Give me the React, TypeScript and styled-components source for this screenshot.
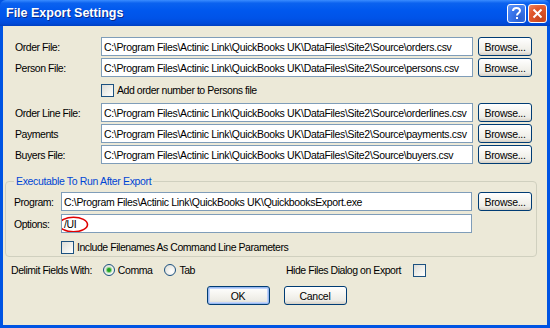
import React from "react";
import styled, { createGlobalStyle, css } from "styled-components";

const Global = createGlobalStyle`
  html, body { margin: 0; padding: 0; background: #ece9d8; }
  body { width: 550px; height: 328px; overflow: hidden; font-family: "Liberation Sans", Arial, sans-serif; }
`;

const Window = styled.div`
  width: 550px;
  height: 328px;
  box-sizing: border-box;
  display: flex;
  flex-direction: column;
  background: #0054e3;
`;

const TitleBar = styled.div`
  height: 26px;
  flex: none;
  display: flex;
  align-items: center;
  padding: 0 3px 0 6px;
  background: linear-gradient(
    to bottom,
    #3a8cff 0%,
    #0b62ef 12%,
    #0058ee 40%,
    #0053e8 70%,
    #004ad9 90%,
    #003fc0 100%
  );
  border-radius: 6px 6px 0 0;
`;

const Title = styled.div`
  flex: 1;
  color: #fff;
  font-family: "Liberation Sans", Arial, sans-serif;
  font-weight: bold;
  font-size: 12.5px;
  letter-spacing: 0px;
  text-shadow: 1px 1px 0 #0a2a8a;
`;

const CaptionButton = styled.div<{ $variant: "help" | "close" }>`
  width: 19px;
  height: 19px;
  box-sizing: border-box;
  border: 1px solid #fff;
  border-radius: 3px;
  margin-left: 2px;
  display: flex;
  align-items: center;
  justify-content: center;
  color: #fff;
  ${(p) =>
    p.$variant === "help"
      ? css`
          background: radial-gradient(circle at 70% 80%, #2a5fd0 0%, #3c7af0 60%, #6a9cf7 100%);
        `
      : css`
          background: radial-gradient(circle at 70% 80%, #c6451e 0%, #e2582c 60%, #f08866 100%);
        `}
`;

const Body = styled.div`
  flex: 1;
  margin: 0 3px 3px 3px;
  background: #ece9d8;
  display: flex;
  flex-direction: column;
  padding: 11px 0 0 0;
  font-size: 10px;
  color: #000;
`;

const FileGrid = styled.div`
  display: grid;
  grid-template-columns: 81px 372px 54px;
  column-gap: 5px;
  row-gap: 2px;
  padding-left: 12px;
  align-items: center;
`;

const Label = styled.div`
  font-size: 10.5px;
  letter-spacing: -0.45px;
  white-space: nowrap;
`;

const TextBox = styled.div`
  height: 19px;
  box-sizing: border-box;
  border: 1px solid #7f9db9;
  background: #fff;
  padding: 0 2px;
  display: flex;
  align-items: center;
  font-size: 10.5px;
  letter-spacing: -0.33px;
  white-space: nowrap;
  overflow: hidden;
  position: relative;
`;

const Button = styled.div<{ $width?: number; $default?: boolean }>`
  width: ${(p) => p.$width ?? 54}px;
  height: 19px;
  box-sizing: border-box;
  border: 1px solid #003c74;
  border-radius: 3px;
  background: linear-gradient(to bottom, #ffffff 0%, #f4f3ee 50%, #ecebe5 80%, #d6d0c5 100%);
  display: flex;
  align-items: center;
  justify-content: center;
  font-size: 10.5px;
  letter-spacing: -0.3px;
  ${(p) =>
    p.$default &&
    css`
      box-shadow: inset 0 0 0 1px #99b9f0, inset 0 0 0 2px #c1d3fb;
    `}
`;

const CheckRow = styled.div<{ $span?: boolean }>`
  display: flex;
  align-items: center;
  gap: 3px;
  height: 22px;
  ${(p) => p.$span && css`grid-column: 2 / 4;`}
`;

const CheckBox = styled.div`
  width: 13px;
  height: 13px;
  box-sizing: border-box;
  border: 1px solid #1c5180;
  background: linear-gradient(135deg, #dcdcd7 0%, #f2f2ee 60%, #ffffff 100%);
  flex: none;
`;

const GroupBox = styled.fieldset`
  margin: 11px 10px 0 2px;
  padding: 5px 4px 0 8px;
  border: 1px solid #d0d0bf;
  border-radius: 4px;
  height: 82px;
  box-sizing: border-box;
  min-width: 0;
`;

const Legend = styled.legend`
  color: #0046d5;
  font-size: 10.5px;
  letter-spacing: -0.35px;
  padding: 0 2px;
  margin-left: 0px;
`;

const ProgGrid = styled.div`
  display: grid;
  grid-template-columns: 41px 411px 54px;
  column-gap: 6px;
  row-gap: 3px;
  align-items: center;
`;

const Ellipse = styled.svg`
  position: absolute;
  left: -4px;
  top: 1px;
`;

const BottomRow = styled.div`
  display: flex;
  align-items: center;
  height: 16px;
  margin-top: 5px;
  padding-left: 8px;
`;

const Radio = styled.div<{ $checked?: boolean }>`
  width: 12px;
  height: 12px;
  box-sizing: border-box;
  border-radius: 50%;
  border: 1px solid #1c5180;
  background: radial-gradient(circle at 65% 65%, #ffffff 0%, #e6e6e0 70%, #d2d2cb 100%);
  display: flex;
  align-items: center;
  justify-content: center;
  flex: none;
  &::after {
    content: "";
    display: ${(p) => (p.$checked ? "block" : "none")};
    width: 4px;
    height: 4px;
    border-radius: 50%;
    background: #21a121;
    box-shadow: 0 0 1px 1px #7fd07f;
  }
`;

const RadioItem = styled.div<{ $ml: number }>`
  display: flex;
  align-items: center;
  gap: 3px;
  margin-left: ${(p) => p.$ml}px;
`;

const Spacer = styled.div`
  flex: 1;
`;

const HideGroup = styled.div`
  display: flex;
  align-items: center;
  gap: 12px;
  margin-right: 121px;
`;

const Buttons = styled.div`
  display: flex;
  justify-content: center;
  gap: 14px;
  margin-top: 8px;
  padding-left: 3px;
`;

const files = [
  { label: "Order File:", value: "C:\\Program Files\\Actinic Link\\QuickBooks UK\\DataFiles\\Site2\\Source\\orders.csv" },
  { label: "Person File:", value: "C:\\Program Files\\Actinic Link\\QuickBooks UK\\DataFiles\\Site2\\Source\\persons.csv" },
];
const files2 = [
  { label: "Order Line File:", value: "C:\\Program Files\\Actinic Link\\QuickBooks UK\\DataFiles\\Site2\\Source\\orderlines.csv" },
  { label: "Payments", value: "C:\\Program Files\\Actinic Link\\QuickBooks UK\\DataFiles\\Site2\\Source\\payments.csv" },
  { label: "Buyers File:", value: "C:\\Program Files\\Actinic Link\\QuickBooks UK\\DataFiles\\Site2\\Source\\buyers.csv" },
];

export default function App() {
  return (
    <>
      <Global />
      <Window>
        <TitleBar>
          <Title>File Export Settings</Title>
          <CaptionButton $variant="help">
            <svg width="11" height="13" viewBox="0 0 11 13">
              <path d="M2 4 C2 1.5 3.5 1 5.5 1 C7.8 1 9 2.2 9 3.8 C9 6 6 6 6 8.5" fill="none" stroke="#fff" strokeWidth="2" />
              <rect x="5" y="10" width="2" height="2" fill="#fff" />
            </svg>
          </CaptionButton>
          <CaptionButton $variant="close">
            <svg width="11" height="11" viewBox="0 0 11 11">
              <path d="M1.5 1.5 L9.5 9.5 M9.5 1.5 L1.5 9.5" stroke="#fff" strokeWidth="2" />
            </svg>
          </CaptionButton>
        </TitleBar>
        <Body>
          <FileGrid>
            {files.map((f) => (
              <React.Fragment key={f.label}>
                <Label>{f.label}</Label>
                <TextBox>{f.value}</TextBox>
                <Button>Browse...</Button>
              </React.Fragment>
            ))}
            <div />
            <CheckRow $span>
              <CheckBox />
              <Label>Add order number to Persons file</Label>
            </CheckRow>
            {files2.map((f) => (
              <React.Fragment key={f.label}>
                <Label>{f.label}</Label>
                <TextBox>{f.value}</TextBox>
                <Button>Browse...</Button>
              </React.Fragment>
            ))}
          </FileGrid>
          <GroupBox>
            <Legend>Executable To Run After Export</Legend>
            <ProgGrid>
              <Label>Program:</Label>
              <TextBox>C:\Program Files\Actinic Link\QuickBooks UK\QuickbooksExport.exe</TextBox>
              <Button>Browse...</Button>
              <Label>Options:</Label>
              <TextBox>
                /UI
                <Ellipse width="31" height="17" viewBox="0 0 31 17">
                  <ellipse cx="15.5" cy="8.5" rx="14" ry="7.3" fill="none" stroke="#e00000" strokeWidth="1.6" />
                </Ellipse>
              </TextBox>
              <div />
              <div />
              <CheckRow $span>
                <CheckBox />
                <Label>Include Filenames As Command Line Parameters</Label>
              </CheckRow>
            </ProgGrid>
          </GroupBox>
          <BottomRow>
            <Label>Delimit Fields With:</Label>
            <RadioItem $ml={11}>
              <Radio $checked />
              <Label>Comma</Label>
            </RadioItem>
            <RadioItem $ml={12}>
              <Radio />
              <Label>Tab</Label>
            </RadioItem>
            <Spacer />
            <HideGroup>
              <Label>Hide Files Dialog on Export</Label>
              <CheckBox />
            </HideGroup>
          </BottomRow>
          <Buttons>
            <Button $width={63} $default>OK</Button>
            <Button $width={63}>Cancel</Button>
          </Buttons>
        </Body>
      </Window>
    </>
  );
}
